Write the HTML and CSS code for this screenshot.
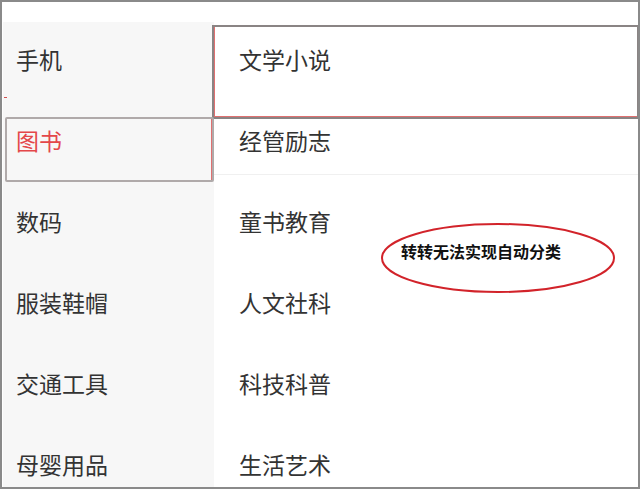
FILE: index.html
```html
<!DOCTYPE html>
<html lang="zh-CN">
<head>
  <meta charset="UTF-8">
  <title>分类</title>
  <link rel="stylesheet" href="styles.css">
</head>
<body>
  <div class="frame">
    <div class="topbar"></div>
    <div class="main">
      <div class="side">
        <div class="side-item">手机</div>
        <div class="side-item active">图书</div>
        <div class="side-item">数码</div>
        <div class="side-item">服装鞋帽</div>
        <div class="side-item">交通工具</div>
        <div class="side-item">母婴用品</div>
      </div>
      <div class="list">
        <div class="list-item">文学小说</div>
        <div class="list-item divided">经管励志</div>
        <div class="list-item">童书教育</div>
        <div class="list-item">人文社科</div>
        <div class="list-item">科技科普</div>
        <div class="list-item">生活艺术</div>
      </div>
    </div>

    <!-- annotations drawn over the screenshot -->
    <div class="mark mark-top"></div>
    <div class="mark mark-side"></div>
    <div class="tick"></div>
    <div class="note">
      <svg class="note-ring" width="236" height="72" viewBox="0 0 236 72">
        <ellipse cx="118" cy="36" rx="116" ry="34" fill="none" stroke="#d2232a" stroke-width="2"/>
      </svg>
      <span class="note-text">转转无法实现自动分类</span>
    </div>
  </div>
</body>
</html>
```

FILE: styles.css
```css
body {
  margin: 0;
  background: #fff;
  font-family: "Noto Sans CJK SC", "Noto Sans", sans-serif;
}

.frame {
  position: relative;
  width: 640px;
  height: 489px;
  box-sizing: border-box;
  border: 2px solid #8a8a8a;
  overflow: hidden;
  display: flex;
  flex-direction: column;
}

.topbar {
  height: 20px;
  flex: none;
  background: #fff;
}

.main {
  flex: 1;
  display: flex;
  min-height: 0;
}

.side {
  width: 211px;
  flex: none;
  background: #f7f7f7;
  margin-left: 1px;
}

.side-item {
  height: 81px;
  box-sizing: border-box;
  display: flex;
  align-items: center;
  padding: 0 0 7px 13px;
  font-size: 23px;
  color: #333;
}

.side-item.active {
  color: #e4474a;
}

.list {
  flex: 1;
  background: #fff;
}

.list-item {
  height: 81px;
  display: flex;
  align-items: center;
  padding: 0 0 7px 25px;
  font-size: 23px;
  color: #333;
  box-sizing: border-box;
}

.list-item.divided {
  height: 72px;
  padding: 2px 0 0 25px;
  margin-bottom: 9px;
  border-bottom: 1px solid #f0f0f0;
}

.mark {
  position: absolute;
  box-sizing: border-box;
}

.mark-top {
  left: 210px;
  top: 23px;
  width: 427px;
  height: 94px;
  border: 2px solid #8a8484;
  box-shadow: inset 1px -1px 0 #e07070;
}

.mark-side {
  left: 3px;
  top: 115px;
  width: 209px;
  height: 65px;
  border: 2px solid #b0aaaa;
  border-radius: 2px;
  box-shadow: inset -1px 0 0 #e07070;
}

.tick {
  position: absolute;
  left: 2px;
  top: 95px;
  width: 3px;
  height: 1px;
  background: #d05050;
}

.note {
  position: absolute;
  left: 378px;
  top: 220px;
  width: 236px;
  height: 72px;
}

.note-ring {
  display: block;
}

.note-text {
  position: absolute;
  left: 21px;
  top: 17px;
  font-size: 16px;
  font-weight: bold;
  color: #111;
  white-space: nowrap;
}
```
